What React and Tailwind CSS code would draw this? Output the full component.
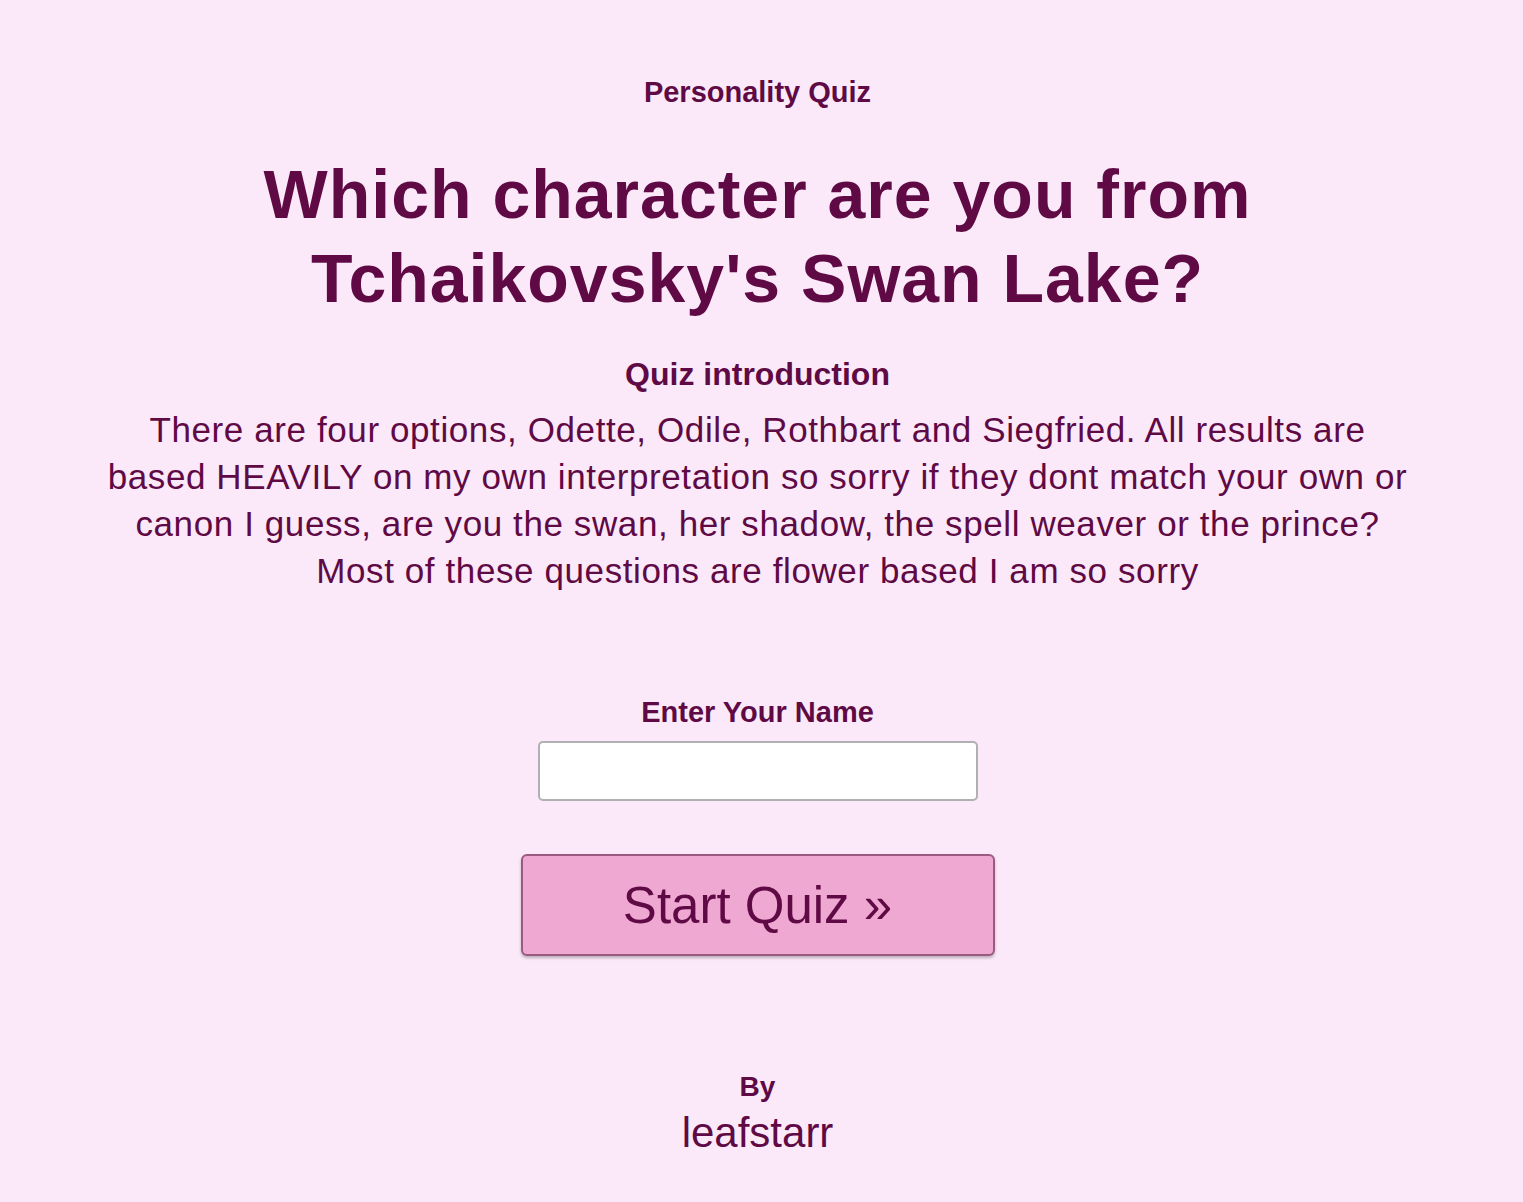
export default function App() {
  return (
    <div className="min-h-[1202px] w-full bg-[#fbe9f9] font-['Liberation_Sans',Arial,sans-serif] text-[#600a45]">
      <div className="w-[1515px] flex flex-col items-center">
        {/* HEADER */}
        <div className="pt-[74px] text-[29px] font-bold leading-[36px]">Personality Quiz</div>

        <h1 className="mt-[42px] text-[68px] font-bold leading-[84px] text-center tracking-[1px]">
          Which character are you from
          <br />
          Tchaikovsky's Swan Lake?
        </h1>

        {/* INTRO */}
        <h2 className="mt-[35px] text-[32px] font-bold leading-[38px]">Quiz introduction</h2>
        <p className="mt-[13px] w-[1302px] text-center text-[35px] leading-[47px] tracking-[0.6px]">
          There are four options, Odette, Odile, Rothbart and Siegfried. All results are based HEAVILY on my own
          interpretation so sorry if they dont match your own or canon I guess, are you the swan, her shadow, the
          spell weaver or the prince? Most of these questions are flower based I am so sorry
        </p>

        {/* NAME FORM */}
        <label className="mt-[100px] text-[29px] font-bold leading-[36px]">Enter Your Name</label>
        <input
          type="text"
          className="mt-[11px] h-[60px] w-[440px] rounded-[5px] border-2 border-[#b0b0b0] bg-white px-3 text-[24px] outline-none"
        />
        <button className="mt-[53px] h-[102px] w-[474px] rounded-[6px] border-2 border-[#9b5b80] bg-[#eea8d2] text-[51px] leading-none text-[#600a45] shadow-[0_2px_3px_rgba(0,0,0,0.25)]">
          Start Quiz »
        </button>

        {/* FOOTER */}
        <div className="mt-[113px] text-[28px] font-bold leading-[36px]">By</div>
        <div className="mt-[4px] text-[42px] leading-[48px]">leafstarr</div>
      </div>
    </div>
  );
}
